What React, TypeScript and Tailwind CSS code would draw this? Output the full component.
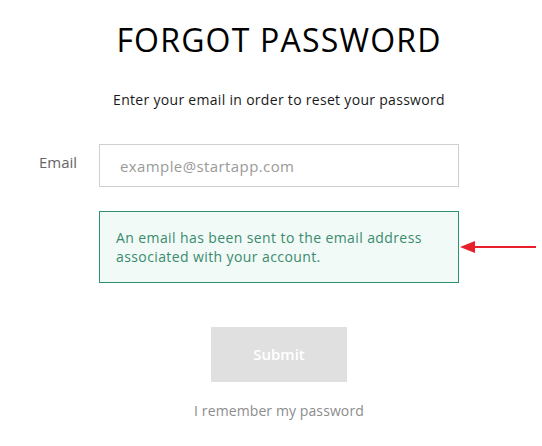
import React from 'react';

const font = { fontFamily: '"Open Sans", "Noto Sans", sans-serif' };

const App: React.FC = () => {
    return (
        <div className="w-[542px] h-[446px] bg-white overflow-hidden" style={font}>
            <div className="grid grid-cols-[60px_360px_auto] pl-[39px]">
                <div />
                <h1 className="text-[32px] leading-[40px] text-black text-center mt-[20px] whitespace-nowrap tracking-[1.2px] -mx-4">
                    FORGOT PASSWORD
                </h1>
                <div />

                <div />
                <p className="text-[14px] leading-[18px] text-[#1a1a1a] text-center mt-[31px] whitespace-nowrap tracking-[0.3px] -mx-4">
                    Enter your email in order to reset your password
                </p>
                <div />

                <label htmlFor="email" className="text-[15px] text-[#666] mt-[35px] pt-[8px] leading-[20px]">
                    Email
                </label>
                <input
                    id="email"
                    type="email"
                    placeholder="example@startapp.com"
                    className="mt-[35px] h-[43px] w-[360px] border border-[#cfcfcf] px-[20px] text-[15px] tracking-[0.4px] text-[#333] placeholder:text-[#9a9a9a] outline-none"
                />
                <div />

                <div />
                <div className="mt-[24px] h-[72px] border border-[#2e8f72] bg-[#f1faf6] px-[16px] pt-[16px] text-[14px] leading-[19px] tracking-[0.4px] text-[#3a8a6e]">
                    An email has been sent to the email address associated with your account.
                </div>
                <div className="mt-[24px] flex items-center h-[72px]">
                    <svg width="78" height="14" viewBox="0 0 78 14">
                        <line x1="14" y1="7" x2="77" y2="7" stroke="#e8202a" strokeWidth="2" />
                        <polygon points="1,7 16,1 16,13" fill="#e8202a" />
                    </svg>
                </div>

                <div />
                <div className="flex flex-col items-center">
                    <button className="mt-[44px] w-[136px] h-[55px] bg-[#e0e0e0] text-white text-[15px] font-semibold">
                        Submit
                    </button>
                    <a className="mt-[20px] text-[14px] leading-[18px] text-[#8c8c8c] tracking-[0.1px]">
                        I remember my password
                    </a>
                </div>
                <div />
            </div>
        </div>
    );
};

export default App;
